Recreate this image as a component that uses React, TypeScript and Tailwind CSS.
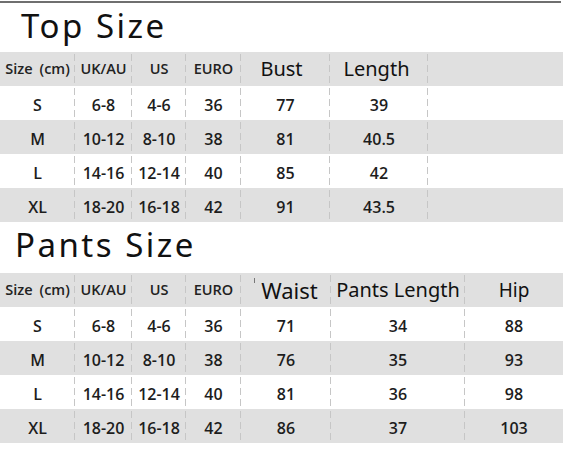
import React from 'react';

type Cell = React.ReactNode;

interface SizeTableProps {
  cols: string;
  header: Cell[];
  rows: Cell[][];
  dividers: number;
}

const divider =
  'bg-[repeating-linear-gradient(to_bottom,transparent_0_2px,#c6c6c6_2px_9px,transparent_9px_11px)] bg-[length:1px_100%] bg-no-repeat bg-right';

const SizeRow: React.FC<{ cols: string; cells: Cell[]; gray: boolean; dividers: number; header?: boolean }> = ({
  cols,
  cells,
  gray,
  dividers,
  header
}) => (
  <div className={`grid h-[34px] ${cols} ${gray ? 'bg-[#e0e0e0]' : 'bg-white'}`}>
    {cells.map((cell, i) => (
      <div
        key={i}
        className={`flex items-center justify-center text-[#1d1d1d] ${i < dividers ? divider : ''} ${
          header ? '' : 'pt-[3px] text-[16px] font-semibold'
        }`}
        style={{ fontFamily: header ? undefined : '"Open Sans", sans-serif' }}
      >
        {cell}
      </div>
    ))}
  </div>
);

const SizeTable: React.FC<SizeTableProps> = ({ cols, header, rows, dividers }) => (
  <div className="flex flex-col">
    <SizeRow cols={cols} cells={header} gray dividers={dividers} header />
    {rows.map((r, i) => (
      <SizeRow key={i} cols={cols} cells={r} gray={i % 2 === 1} dividers={dividers} />
    ))}
  </div>
);

const small = (text: React.ReactNode) => (
  <span className="text-[14.5px] font-semibold text-[#222]" style={{ fontFamily: '"Open Sans", sans-serif' }}>
    {text}
  </span>
);

const big = (text: string, size: string, extra = '') => (
  <span className={`${size} text-[#111] ${extra}`} style={{ fontFamily: '"Noto Sans", sans-serif' }}>
    {text}
  </span>
);

const sizeLabel = small(
  <>
    Size<span className="ml-[7px]">(cm)</span>
  </>
);

const baseHeader = [sizeLabel, small('UK/AU'), small('US'), small('EURO')];

const topRows = [
  ['S', '6-8', '4-6', '36', '77', '39', ''],
  ['M', '10-12', '8-10', '38', '81', '40.5', ''],
  ['L', '14-16', '12-14', '40', '85', '42', ''],
  ['XL', '18-20', '16-18', '42', '91', '43.5', '']
];

const pantsRows = [
  ['S', '6-8', '4-6', '36', '71', '34', '88'],
  ['M', '10-12', '8-10', '38', '76', '35', '93'],
  ['L', '14-16', '12-14', '40', '81', '36', '98'],
  ['XL', '18-20', '16-18', '42', '86', '37', '103']
];

const Title: React.FC<{ text: string; className: string }> = ({ text, className }) => (
  <div
    className={`flex items-end text-[33px] leading-none tracking-[2.5px] text-[#111] ${className}`}
    style={{ fontFamily: '"Noto Sans", sans-serif' }}
  >
    {text}
  </div>
);

export default function App() {
  return (
    <div className="relative h-[451px] w-[563px] overflow-hidden bg-white">
      <div className="mt-[1px] h-[2px] w-[561px] bg-[#6f6f6f]" />
      <Title text="Top Size" className="h-[40px] pl-[21px] pb-[1px]" />
      <div className="h-[9px]" />
      <SizeTable
        cols="grid-cols-[75px_57px_54px_55px_89px_98px_1fr]"
        header={[...baseHeader, big('Bust', 'text-[20px]', 'mr-[8px]'), big('Length', 'text-[20px]', 'mr-[5px]'), '']}
        rows={topRows}
        dividers={6}
      />
      <Title text="Pants Size" className="h-[41px] pl-[15px] pb-[2px]" />
      <div className="h-[10px]" />
      <SizeTable
        cols="grid-cols-[75px_57px_54px_55px_90px_134px_1fr]"
        header={[
          ...baseHeader,
          <span key="w" className="flex items-start">
            <span className="mr-[6px] mt-[4px] h-[5px] w-[1px] bg-[#777]" />
            {big('Waist', 'text-[22px]')}
          </span>,
          big('Pants Length', 'text-[20px]'),
          big('Hip', 'text-[19px]')
        ]}
        rows={pantsRows}
        dividers={6}
      />
    </div>
  );
}
